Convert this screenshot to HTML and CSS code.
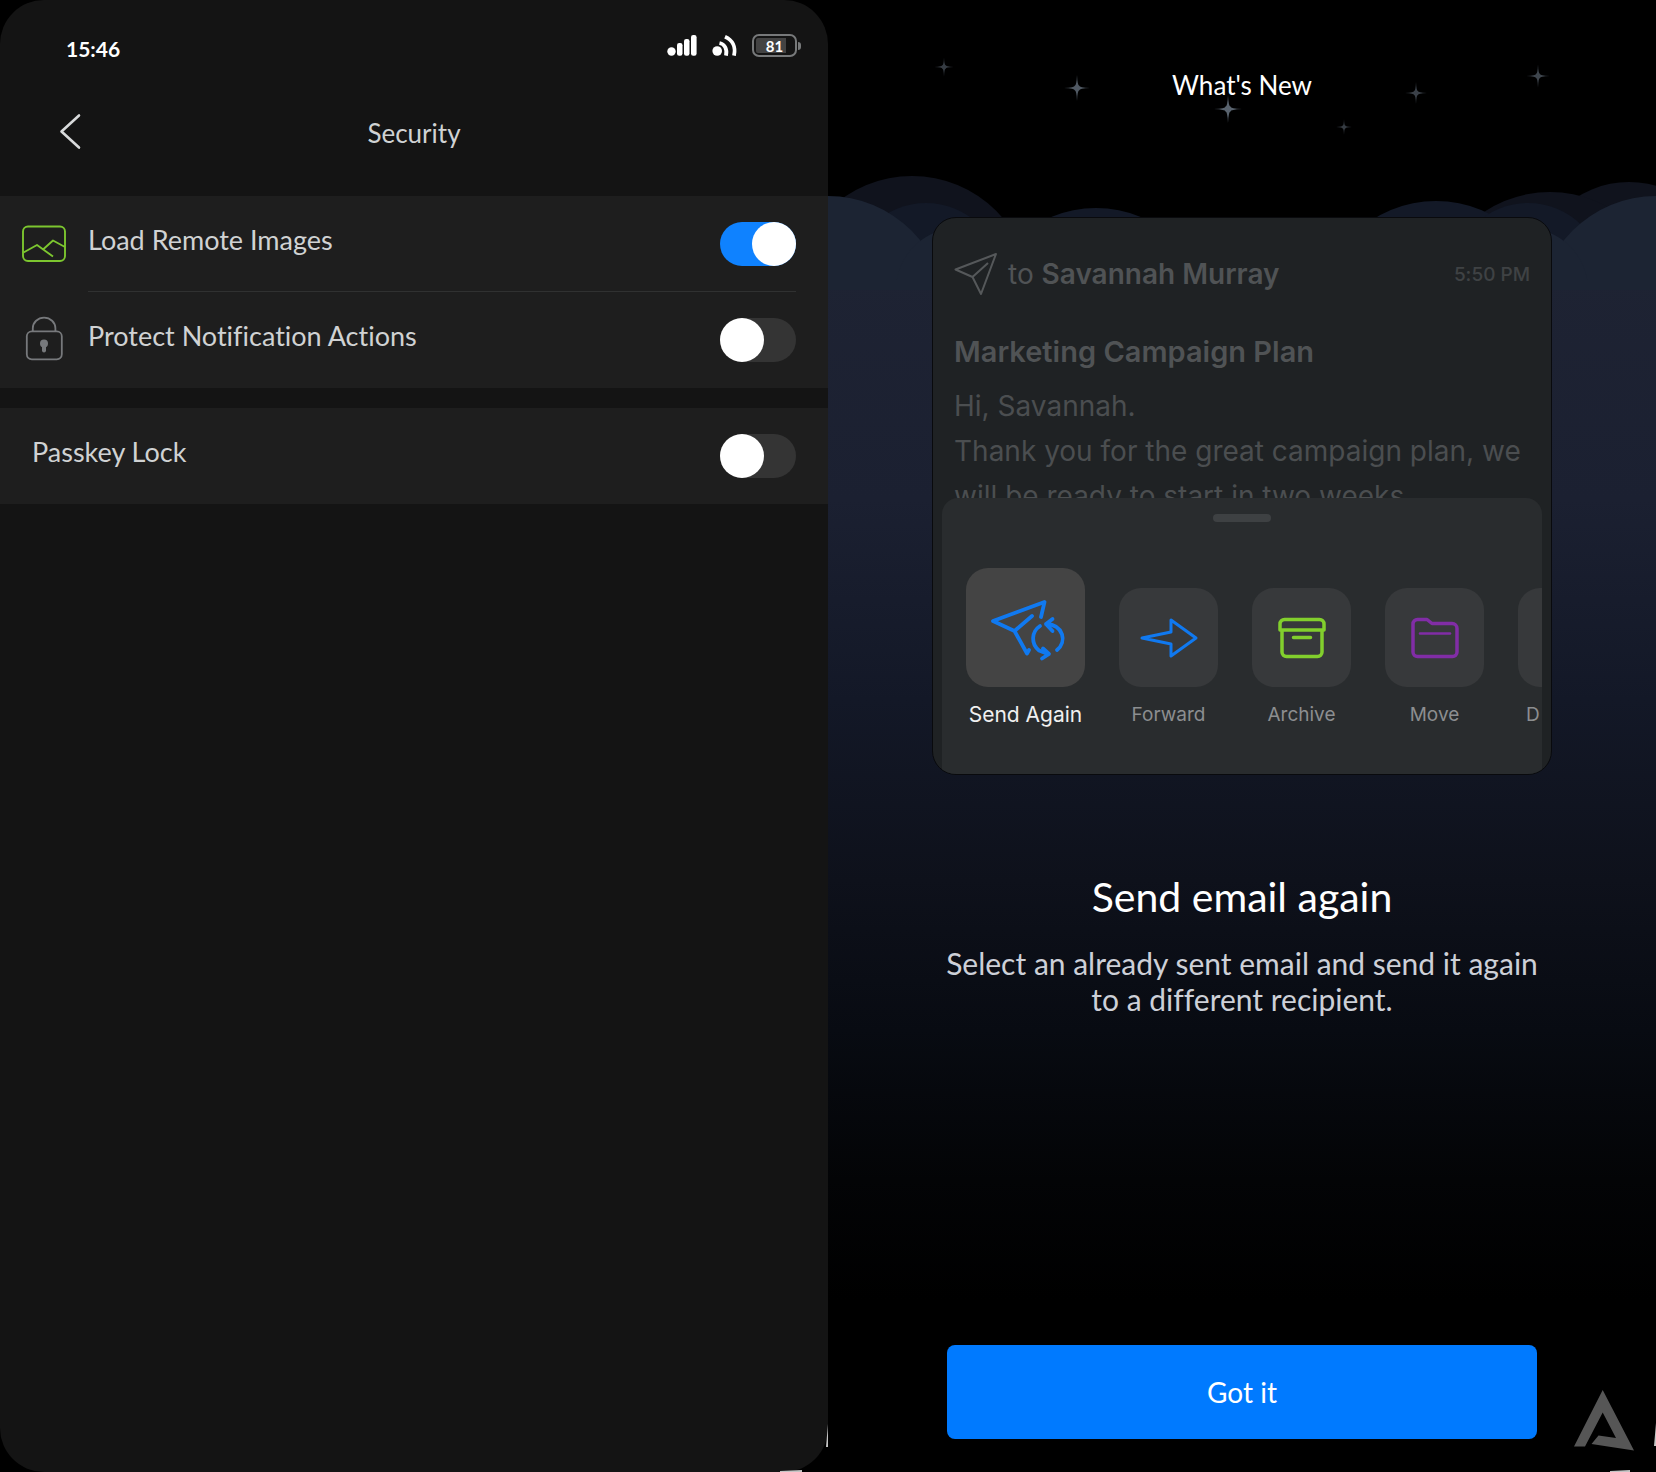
FILE: index.html
```html
<!DOCTYPE html>
<html lang="en">
<head>
<meta charset="utf-8">
<meta name="viewport" content="width=device-width, initial-scale=1">
<title>Security</title>
<link rel="stylesheet" href="styles.css">
</head>
<body>
<div class="screens">
  <section class="settings">
    <div class="status-bar">
      <span class="clock">15:46</span>
      <div class="status-icons">
        <svg width="30" height="21" viewBox="0 0 30 21" fill="#fff" aria-hidden="true"><circle cx="4.500" cy="16.500" r="4.200"/><rect x="10" y="8" width="5.500" height="12.700" rx="2.200"/><rect x="17" y="4" width="5.500" height="16.700" rx="2.200"/><rect x="24" y="0" width="5.600" height="20.700" rx="2.200"/></svg>
        <svg width="25" height="21" viewBox="0 0 25 21" fill="none" stroke="#fff" stroke-width="3.800" aria-hidden="true"><circle cx="5.200" cy="16" r="4.800" fill="#fff" stroke="none"/><path d="M7.500 8C12.500 9 15.500 14 14 20.600M13 1.800C20.500 5 24 12 22 20.600"/></svg>
        <span class="battery"><span class="battery-level">81</span></span>
      </div>
    </div>
    <header class="title-bar">
      <button class="back" type="button" aria-label="Back"><svg width="22" height="38" viewBox="0 0 22 38" fill="none" stroke="#d8dadb" stroke-width="2.600" stroke-linecap="round" stroke-linejoin="round"><path d="M20 1.500 2.500 17.500 20 33.500"/></svg></button>
      <h1 class="title">Security</h1>
    </header>
    <div class="group">
      <div class="row">
        <svg class="row-icon" width="44" height="44" viewBox="0 0 44 44" fill="none" stroke="#7cc62f" stroke-width="1.900" stroke-linejoin="round" aria-hidden="true"><rect x="1" y="4.500" width="42" height="34.500" rx="5"/><path d="M1.500 30.500 15 23 31 34.500M21 27.500 31 18.500 43 25" /></svg>
        <label class="row-body divided" for="images"><span class="row-label">Load Remote Images</span><input class="switch" type="checkbox" role="switch" id="images" checked></label>
      </div>
      <div class="row">
        <svg class="row-icon" width="44" height="44" viewBox="0 2 44 44" fill="none" stroke="#77797c" stroke-width="1.800" aria-hidden="true"><rect x="4.800" y="15.300" width="35" height="28" rx="5"/><path d="M10.800 15.300V12.300a11.300 10.700 0 0 1 22.600 0v3"/><circle cx="22" cy="27.500" r="4" fill="#77797c" stroke="none"/><path d="M22 28v6.500" stroke-width="4" stroke-linecap="round"/></svg>
        <label class="row-body" for="protect"><span class="row-label">Protect Notification Actions</span><input class="switch" type="checkbox" role="switch" id="protect"></label>
      </div>
    </div>
    <div class="group">
      <div class="row plain">
        <label class="row-body" for="passkey"><span class="row-label">Passkey Lock</span><input class="switch" type="checkbox" role="switch" id="passkey"></label>
      </div>
    </div>
  </section>

  <section class="news">
    <svg class="sky" viewBox="0 0 828 290" aria-hidden="true">
      <defs><path id="star" d="M0-14Q.5-2.500 2.500-2.500 2.500-.5 14 0 2.500.5 2.500 2.500.5 2.500 0 14-.5 2.500-2.500 2.500-2.500.5-14 0-2.500-.5-2.500-2.500-.5-2.500 0-14Z"/></defs>
      <g fill="#59636e">
        <use href="#star" transform="translate(116 67) scale(.68)" opacity=".6"/>
        <use href="#star" transform="translate(249 88) scale(.92)" opacity=".9"/>
        <use href="#star" transform="translate(400 109)"/>
        <use href="#star" transform="translate(516 127) scale(.56)" opacity=".6"/>
        <use href="#star" transform="translate(588 93) scale(.78)" opacity=".65"/>
        <use href="#star" transform="translate(710 76) scale(.82)" opacity=".7"/>
      </g>
      <g fill="#10131d"><circle cx="84" cy="295" r="119"/><circle cx="801" cy="279" r="97"/><circle cx="722" cy="311" r="119"/></g>
      <g fill="#131927"><circle cx="268" cy="325" r="117"/><circle cx="608" cy="319" r="118"/><circle cx="98" cy="279" r="76"/><circle cx="700" cy="279" r="76"/></g>
      <g fill="#1c2433"><circle cx="0" cy="314" r="118"/><circle cx="828" cy="314" r="118"/><circle cx="130" cy="290" r="62"/><circle cx="698" cy="290" r="62"/><path d="M0 280H828V291H0Z"/></g>
    </svg>
    <div class="news-content">
      <h2 class="news-title">What's New</h2>
      <div class="card">
        <div class="mail">
          <div class="mail-head">
            <svg width="44" height="44" viewBox="0 0 44 44" fill="none" stroke="#55585a" stroke-width="2" stroke-linejoin="round" aria-hidden="true"><path d="M1.500 17.500 42 2 27 42 18.500 25ZM18.500 25 34 11"/></svg>
            <p class="mail-to">to <strong>Savannah Murray</strong></p>
            <time class="mail-time">5:50 PM</time>
          </div>
          <h3 class="mail-subject">Marketing Campaign Plan</h3>
          <p class="mail-text">Hi, Savannah.<br>Thank you for the great campaign plan, we will be ready to start in two weeks.</p>
        </div>
        <div class="sheet">
          <span class="handle"></span>
          <div class="actions">
            <button class="action main" type="button"><span class="tile"><svg width="76" height="62" viewBox="0 0 76 62" fill="none" stroke="#1079f0" stroke-width="3.800" stroke-linecap="round" stroke-linejoin="round"><path d="M53 20 56.500 5 5 24 26.500 34 39 56.500 41 53M26.500 34 44 19"/><path d="M52 29C43 35 43 47 51 53.500L60 57M55 51.500 61 57 54 61.500M58 27C76 28 79 45 69 53M64.500 22 58 27 64.500 34"/></svg></span>Send Again</button>
            <button class="action" type="button"><span class="tile"><svg width="58" height="42" viewBox="0 0 58 42" fill="none" stroke="#1079f0" stroke-width="3" stroke-linejoin="round"><path d="M2 21 31 15V3L56 21 31 39V27Z"/></svg></span>Forward</button>
            <button class="action" type="button"><span class="tile"><svg width="48" height="42" viewBox="0 0 48 42" fill="none" stroke="#82cf2d" stroke-width="3.500" stroke-linecap="round" stroke-linejoin="round"><path d="M2 13V7a4.500 4.500 0 0 1 4.500-4.500h35A4.500 4.500 0 0 1 46 7v6ZM4 13v22a4.500 4.500 0 0 0 4.500 4.500h31A4.500 4.500 0 0 0 44 35V13M15.500 20.500h17"/></svg></span>Archive</button>
            <button class="action" type="button"><span class="tile"><svg width="48" height="42" viewBox="0 0 48 42" fill="none" stroke="#812da6" stroke-width="3.500" stroke-linecap="round" stroke-linejoin="round"><path d="M2 7a4.500 4.500 0 0 1 4.500-4.500H16l5 4H41a5 5 0 0 1 5 5V35a4.500 4.500 0 0 1-4.500 4.500h-35A4.500 4.500 0 0 1 2 35Z"/><path d="M9 16.500h30" stroke-width="2.500"/></svg></span>Move</button>
            <button class="action next" type="button"><span class="tile"></span><span class="next-label">D</span></button>
          </div>
        </div>
      </div>
      <div class="message">
        <h3 class="message-title">Send email again</h3>
        <p class="message-text">Select an already sent email and send it again to a different recipient.</p>
      </div>
      <button class="confirm" type="button">Got it</button>
    </div>
    <svg class="mark" width="82" height="82" viewBox="0 0 82 82" aria-hidden="true"><path fill="#565656" fill-rule="evenodd" d="M28.700 0 60 60.500 17.500 54 24.500 45.500 42 48 28.700 22.500 11 56.500H0Z"/><path fill="#c5c5c5" d="M82 33V56H80ZM36 81 56 80V82H36Z"/></svg>
    <svg class="corner" width="50" height="50" viewBox="0 0 50 50" aria-hidden="true"><path fill="#c5c5c5" d="M50 2V25H48ZM2 49 24 48V50H2Z"/></svg>
  </section>
</div>
</body>
</html>
```

FILE: styles.css
```css
* { box-sizing: border-box; }
body { margin: 0; background: #000; font-family: Lato, "Liberation Sans", sans-serif; font-variant-ligatures: none; }
h1, h2, h3, p { margin: 0; font-weight: 400; }
button { padding: 0; border: 0; background: none; font: inherit; color: inherit; cursor: pointer; }
svg { display: block; flex: none; overflow: visible; }

.screens { display: grid; grid-template-columns: repeat(2, minmax(0, 1fr)); min-height: 100vh; }

/* Security settings */
.settings { background: #141414; border-radius: 44px; color: #d0d2d3; overflow: hidden; }
.status-bar { display: flex; align-items: center; justify-content: space-between; height: 96px; padding: 0 28px 0 66px; }
.clock { font-size: 21px; font-weight: 700; color: #fff; }
.status-icons { display: flex; align-items: center; gap: 15px; padding-bottom: 5px; }
.battery { position: relative; width: 45px; height: 23px; padding: 2px; border: 2px solid #77797a; border-radius: 7px; margin-right: 3px; }
.battery::after { content: ""; position: absolute; top: 6px; right: -6px; width: 3px; height: 8px; border-radius: 0 3px 3px 0; background: #77797a; }
.battery-level { display: flex; align-items: center; justify-content: center; width: 100%; height: 100%; background: linear-gradient(90deg, #434343 80%, transparent 80%); color: #fff; font-size: 15px; font-weight: 700; border-radius: 2px; }
.title-bar { display: grid; grid-template-columns: 60px 1fr 60px; align-items: center; height: 74px; margin-bottom: 26px; padding: 0 40px; }
.back { display: flex; align-items: center; justify-content: center; height: 60px; }
.title { text-align: center; font-size: 26px; line-height: 32px; }
.group { background: #1e1e1e; margin-bottom: 20px; }
.row { display: flex; align-items: center; gap: 22px; padding-left: 22px; }
.row-body { flex: 1; display: flex; align-items: center; justify-content: space-between; height: 96px; margin-right: 32px; }
.row-body.divided { box-shadow: inset 0 -1px #303131; }
.row-label { padding-bottom: 10px; font-size: 27px; }
.plain { padding-left: 32px; }
.switch { appearance: none; flex: none; width: 76px; height: 44px; margin: 0; border-radius: 22px; background: #343434; cursor: pointer; }
.switch::before { content: ""; display: block; width: 44px; height: 44px; border-radius: 50%; background: #fff; }
.switch:checked { background: #0f82ff; }
.switch:checked::before { margin-left: auto; }

/* What's New */
.news { position: relative; display: flex; flex-direction: column; background: linear-gradient(#000 270px, #1e2333 270px, #1b2031 500px, #131827 700px, #0e111b 880px, #080b12 1030px, #030406 1180px, #000 1300px); }
.sky { position: absolute; top: 0; left: 0; width: 100%; height: auto; overflow: hidden; }
.news-content { position: relative; flex: 1; display: flex; flex-direction: column; padding: 0 104px 33px; color: #fff; text-align: center; }
.news-title { padding-top: 69px; margin-bottom: 116px; font-size: 26px; line-height: 32px; }
.card { width: 100%; height: 558px; padding: 0 9px; border: 1px solid #090a0d; border-radius: 24px; background: #1f2224; font-family: Inter, "Liberation Sans", sans-serif; overflow: hidden; }
.mail { padding: 34px 12px 0; text-align: left; color: #505355; font-size: 28px; }
.mail-head { display: flex; align-items: center; gap: 10px; height: 44px; }
.mail-to { flex: 1; }
.mail-to strong { font-weight: 600; }
.mail-time { font-size: 19px; font-weight: 500; color: #3f4244; }
.mail-subject { margin: 34px 0 10px; font-size: 29px; line-height: 44px; font-weight: 600; }
.mail-text { line-height: 45px; color: #4b4e50; }
.sheet { position: relative; margin-top: -21px; height: 277px; padding: 16px 0 0 24px; border-radius: 16px 16px 0 0; background: #292c2e; overflow: hidden; }
.handle { display: block; width: 58px; height: 8px; margin: 0 auto 46px; border-radius: 4px; background: #3e4143; translate: -12px 0; }
.actions { display: flex; align-items: flex-end; gap: 34px; }
.action { flex: none; display: flex; flex-direction: column; align-items: center; gap: 13px; width: 99px; color: #8c8e90; font-size: 19px; line-height: 30px; }
.tile { display: flex; align-items: center; justify-content: center; width: 99px; height: 99px; border-radius: 22px; background: #37393b; }
.main { width: 119px; color: #f0f0f0; font-size: 21px; }
.main .tile { width: 119px; height: 119px; background: #444; }
.next { align-items: flex-start; }
.next-label { padding-left: 8px; }
.message { padding-top: 98px; }
.message-title { font-size: 41px; line-height: 48px; }
.message-text { margin-top: 24px; padding: 0 8px; font-size: 30px; line-height: 36px; color: #cdd0d8; }
.confirm { height: 94px; margin: auto 15px 0; border-radius: 8px; background: #007aff; font-size: 28px; color: #fff; }
.mark { position: absolute; right: 0; bottom: 0; }
.corner { position: absolute; left: -50px; bottom: 0; }
```
